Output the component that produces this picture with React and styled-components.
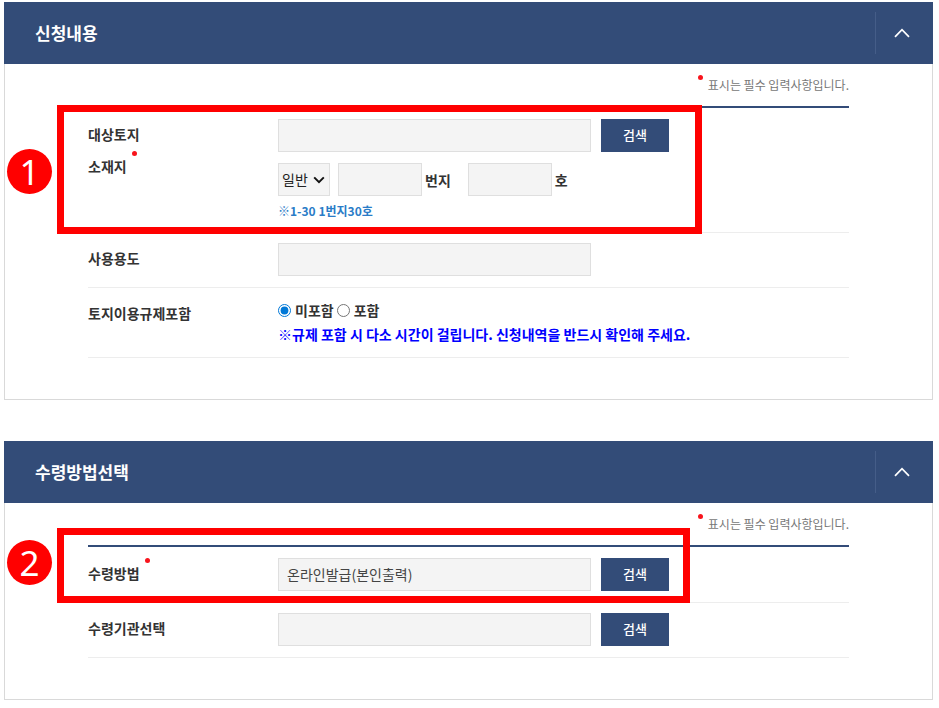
import React, { useState } from "react";
import styled, { createGlobalStyle } from "styled-components";

const NAVY = "#334c78";
const RED = "#ff0000";

const GlobalStyle = createGlobalStyle`
  *, *::before, *::after { box-sizing: border-box; }
  body { margin: 0; background: #fff; }
  body, input, select, button {
    font-family: "Noto Sans CJK KR", "Noto Sans", sans-serif;
    font-size: 14px;
    color: #333;
  }
`;

const Page = styled.main`
  display: flex;
  flex-direction: column;
  gap: 41px;
  padding: 2px 6px 8px 4px;
`;

const Panel = styled.section`
  display: flex;
  flex-direction: column;
`;

const PanelHeader = styled.header`
  display: flex;
  align-items: center;
  justify-content: space-between;
  height: 62px;
  padding-left: 31px;
  background: ${NAVY};
`;

const PanelTitle = styled.h2`
  margin: 0;
  font-size: 17px;
  line-height: 24px;
  font-weight: 700;
  color: #fff;
`;

const ToggleButton = styled.button`
  display: flex;
  align-items: center;
  justify-content: center;
  width: 58px;
  height: 42px;
  padding: 0 5px 0 0;
  border: 0;
  border-left: 1px solid #455d88;
  background: transparent;
  cursor: pointer;
`;

const PanelBody = styled.div`
  padding: 0 83px 41px;
  border: 1px solid #d9d9d9;
  border-top: 0;
`;

const Notice = styled.p`
  display: flex;
  justify-content: flex-end;
  gap: 5px;
  margin: 0;
  padding: 11px 0;
  font-size: 12px;
  line-height: 20px;
  color: #777;
`;

const RequiredDot = styled.span`
  flex: none;
  width: 5px;
  height: 5px;
  border-radius: 50%;
  background: #f8141c;
`;

const Rows = styled.div`
  padding-top: 1px;
  border-top: 2px solid ${NAVY};
`;

const Row = styled.div`
  position: relative;
  display: grid;
  grid-template-columns: 190px minmax(0, 1fr);
  align-items: start;
  padding: 10px 0 11px;
  border-bottom: 1px solid #ededed;
`;

const Label = styled.label`
  display: flex;
  flex-direction: column;
  gap: 2px;
  line-height: 30px;
  font-weight: 700;
`;

const LabelLine = styled.span`
  display: flex;
  align-items: flex-start;
  gap: 5px;
`;

const Fields = styled.div`
  display: flex;
  flex-direction: column;
`;

const FieldLine = styled.div`
  display: flex;
  align-items: center;
  gap: 10px;
`;

const TextInput = styled.input`
  flex: 0 1 313px;
  min-width: 0;
  height: 33px;
  padding: 0 8px 2px;
  border: 1px solid #dfdfdf;
  border-radius: 0;
  background: #f4f4f4;
  color: #444;
`;

const SearchButton = styled.button`
  flex: none;
  width: 68px;
  height: 33px;
  padding: 0 0 2px;
  border: 0;
  background: ${NAVY};
  color: #fff;
  font-size: 13px;
  font-weight: 500;
  cursor: pointer;
`;

const LotLine = styled(FieldLine)`
  gap: 8px;
  margin-top: 11px;
`;

const SelectBox = styled.span`
  display: grid;
  align-items: center;
  width: 52px;

  > * { grid-area: 1 / 1; }
  > svg {
    justify-self: end;
    margin-right: 5px;
    pointer-events: none;
  }
`;

const LotSelect = styled.select`
  appearance: none;
  width: 100%;
  height: 33px;
  padding: 0 0 2px 3px;
  border: 1px solid #dfdfdf;
  border-radius: 0;
  background: #f4f4f4;
  color: #222;
`;

const LotUnit = styled.label`
  display: flex;
  align-items: center;
  gap: 3px;
  margin-right: 9px;
  line-height: 30px;
  font-weight: 700;
`;

const LotInput = styled(TextInput)`
  flex: none;
  width: 84px;
`;

const Hint = styled.p`
  margin: 4px 0 0;
  font-size: 12px;
  line-height: 21px;
  font-weight: 700;
  color: #2a7cc7;
`;

const RadioLine = styled.div`
  display: flex;
  gap: 3px;
`;

const RadioLabel = styled.label`
  display: flex;
  align-items: center;
  gap: 4px;
  line-height: 24px;
  font-weight: 700;
`;

const Radio = styled.input`
  width: 13px;
  height: 13px;
  margin: 0;
  accent-color: #0078d7;
`;

const Warning = styled.p`
  margin: 0;
  line-height: 24px;
  font-weight: 700;
  color: #0000ff;
`;

const Highlight = styled.div`
  position: absolute;
  z-index: 1;
  top: ${(p) => p.$top}px;
  bottom: ${(p) => p.$bottom}px;
  left: -31px;
  width: ${(p) => p.$width}px;
  border: 7px solid ${RED};
  pointer-events: none;
`;

const StepBadge = styled.span`
  position: absolute;
  z-index: 1;
  top: ${(p) => p.$top}px;
  left: -81px;
  display: flex;
  align-items: center;
  justify-content: center;
  width: 45px;
  height: 45px;
  border-radius: 50%;
  background: ${RED};
  color: #fff;
  font-family: "Noto Sans", sans-serif;
  font-size: 35px;
  line-height: 45px;
`;

function FormPanel({ title, children }) {
  const [open, setOpen] = useState(true);
  return (
    <Panel>
      <PanelHeader>
        <PanelTitle>{title}</PanelTitle>
        <ToggleButton
          type="button"
          aria-label={title}
          aria-expanded={open}
          onClick={() => setOpen(!open)}
        >
          <svg width="16" height="10" viewBox="0 0 16 10" fill="none" aria-hidden="true">
            <path d="M1 8.8 8 1.6l7 7.2" stroke="#fff" strokeWidth="1.7" />
          </svg>
        </ToggleButton>
      </PanelHeader>
      {open && (
        <PanelBody>
          <Notice>
            <RequiredDot />
            표시는 필수 입력사항입니다.
          </Notice>
          <Rows>{children}</Rows>
        </PanelBody>
      )}
    </Panel>
  );
}

export default function App() {
  return (
    <>
      <GlobalStyle />
      <Page>
        <FormPanel title="신청내용">
          <Row>
            <Label htmlFor="land">
              <span>대상토지</span>
              <LabelLine>
                소재지
                <RequiredDot />
              </LabelLine>
            </Label>
            <Fields>
              <FieldLine>
                <TextInput id="land" type="text" />
                <SearchButton type="button">검색</SearchButton>
              </FieldLine>
              <LotLine>
                <SelectBox>
                  <LotSelect aria-label="대상토지 소재지" defaultValue="일반">
                    <option>일반</option>
                  </LotSelect>
                  <svg width="12" height="8" viewBox="0 0 12 8" fill="none" aria-hidden="true">
                    <path d="M1.2 1.4 6 6.1l4.8-4.7" stroke="#111" strokeWidth="2" />
                  </svg>
                </SelectBox>
                <LotUnit>
                  <LotInput type="text" />
                  번지
                </LotUnit>
                <LotUnit>
                  <LotInput type="text" />호
                </LotUnit>
              </LotLine>
              <Hint>※1-30 1번지30호</Hint>
            </Fields>
            <Highlight $top={-4} $bottom={-2} $width={645} />
            <StepBadge $top={40}>1</StepBadge>
          </Row>
          <Row>
            <Label htmlFor="usage">사용용도</Label>
            <Fields>
              <FieldLine>
                <TextInput id="usage" type="text" />
              </FieldLine>
            </Fields>
          </Row>
          <Row>
            <Label as="span" id="regulation">토지이용규제포함</Label>
            <Fields>
              <RadioLine role="radiogroup" aria-labelledby="regulation">
                <RadioLabel>
                  <Radio type="radio" name="regulation" defaultChecked />
                  미포함
                </RadioLabel>
                <RadioLabel>
                  <Radio type="radio" name="regulation" />
                  포함
                </RadioLabel>
              </RadioLine>
              <Warning>
                ※규제 포함 시 다소 시간이 걸립니다. 신청내역을 반드시 확인해 주세요.
              </Warning>
            </Fields>
          </Row>
        </FormPanel>

        <FormPanel title="수령방법선택">
          <Row>
            <Label htmlFor="method">
              <LabelLine>
                수령방법
                <RequiredDot />
              </LabelLine>
            </Label>
            <Fields>
              <FieldLine>
                <TextInput id="method" type="text" defaultValue="온라인발급(본인출력)" />
                <SearchButton type="button">검색</SearchButton>
              </FieldLine>
            </Fields>
            <Highlight $top={-20} $bottom={-1} $width={633} />
            <StepBadge $top={-8}>2</StepBadge>
          </Row>
          <Row>
            <Label htmlFor="agency">수령기관선택</Label>
            <Fields>
              <FieldLine>
                <TextInput id="agency" type="text" />
                <SearchButton type="button">검색</SearchButton>
              </FieldLine>
            </Fields>
          </Row>
        </FormPanel>
      </Page>
    </>
  );
}
